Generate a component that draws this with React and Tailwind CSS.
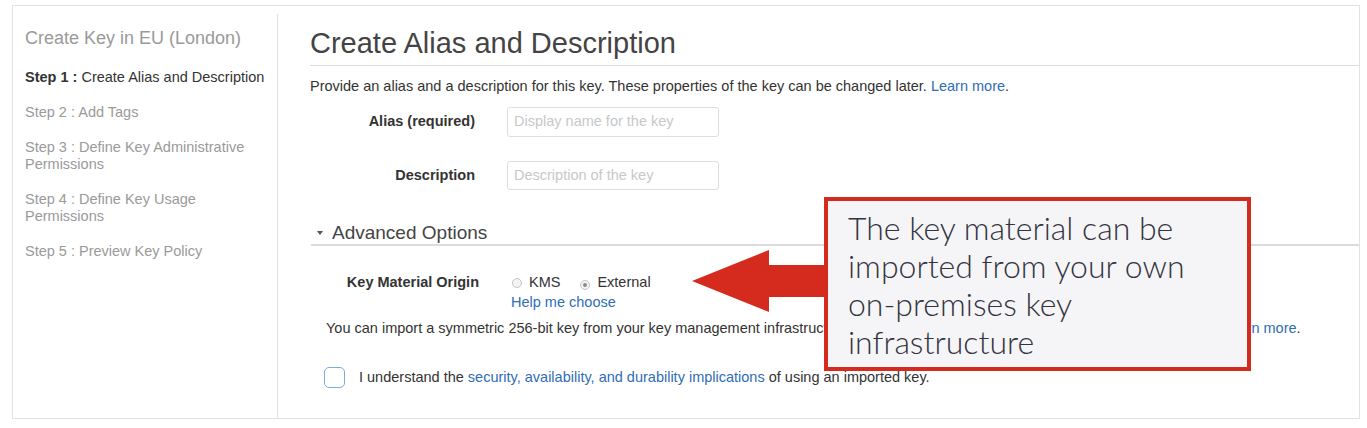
import React from 'react';

const steps = [
  { label: 'Step 2 : Add Tags' },
  { label: 'Step 3 : Define Key Administrative Permissions' },
  { label: 'Step 4 : Define Key Usage Permissions' },
  { label: 'Step 5 : Preview Key Policy' }
];

function Radio({ checked }) {
  return (
    <span className="inline-flex items-center justify-center w-[10px] h-[10px] rounded-full border border-[#c4c4c4] bg-[#f4f4f4]">
      {checked && <span className="w-[4px] h-[4px] rounded-full bg-[#8a8a8a]" />}
    </span>
  );
}

export default function App() {
  return (
    <div className="relative w-[1367px] h-[428px] bg-white font-['Liberation_Sans',Arial,sans-serif] text-[#333]">
      <div className="absolute left-[12px] top-[5px] w-[1348px] h-[414px] border border-[#e2e2e2] flex">
        {/* sidebar */}
        <div className="w-[265px] mt-[8px] border-r border-[#e2e2e2] pl-[12px] pt-[13px]">
          <div className="text-[18px] text-[#9a9a9a] leading-[22px]">Create Key in EU (London)</div>
          <div className="mt-[20px] text-[14.5px] leading-[17px] text-[#333] whitespace-nowrap">
            <span className="font-bold">Step 1 :</span> Create Alias and Description
          </div>
          {steps.map((s) => (
            <div key={s.label} className="mt-[18px] text-[14.5px] leading-[17px] text-[#9a9a9a] pr-[14px]">
              {s.label}
            </div>
          ))}
        </div>

        {/* main */}
        <div className="flex-1 pt-[21px]">
          <div className="ml-[32px] border-b border-[#dcdcdc] pb-[6px]">
            <h1 className="text-[29px] leading-[32px] text-[#444]">Create Alias and Description</h1>
          </div>
          <p className="ml-[32px] mt-[12px] text-[14.5px] leading-[17px] text-[#333]">
            Provide an alias and a description for this key. These properties of the key can be changed later.{' '}
            <span className="text-[#2f6db5]">Learn more</span>.
          </p>

          <div className="ml-[32px] mt-[12px] flex items-center">
            <label className="w-[165px] text-right text-[14.5px] font-bold text-[#333]">Alias (required)</label>
            <div className="ml-[32px] w-[212px] h-[30px] border border-[#dedede] rounded-[3px] px-[6px] flex items-center text-[14.5px] text-[#c8c8c8]">
              Display name for the key
            </div>
          </div>
          <div className="ml-[32px] mt-[24px] flex items-center">
            <label className="w-[165px] text-right text-[14.5px] font-bold text-[#333]">Description</label>
            <div className="ml-[32px] w-[212px] h-[29px] border border-[#dedede] rounded-[3px] px-[6px] flex items-center text-[14.5px] text-[#c8c8c8]">
              Description of the key
            </div>
          </div>

          <div className="ml-[33px] mt-[32px] border-b-2 border-[#dcdcdc] flex items-center">
            <span className="ml-[6px] w-0 h-0 border-l-[3px] border-r-[3px] border-t-[4px] border-l-transparent border-r-transparent border-t-[#555]" />
            <span className="ml-[9px] text-[19px] leading-[22px] text-[#444]">Advanced Options</span>
          </div>

          <div className="ml-[32px] mt-[28px] flex items-start">
            <label className="w-[169px] text-right text-[14.5px] leading-[17px] font-bold text-[#333]">Key Material Origin</label>
            <div className="ml-[32px]">
              <div className="flex items-center text-[14.5px] leading-[17px] text-[#333] pl-[1px]">
                <Radio />
                <span className="ml-[7px]">KMS</span>
                <span className="ml-[20px]"><Radio checked /></span>
                <span className="ml-[7px]">External</span>
              </div>
              <div className="mt-[3px] text-[14.5px] leading-[17px] text-[#2f6db5]">Help me choose</div>
            </div>
          </div>

          <p className="ml-[48px] mt-[9px] text-[14.5px] leading-[17px] text-[#333] whitespace-nowrap">
            You can import a symmetric 256-bit key from your key management infrastructure into KMS and use it like any other customer master keys.{' '}
            <span className="text-[#2f6db5]">Learn more</span>.
          </p>

          <div className="ml-[46px] mt-[30px] flex items-center">
            <span className="w-[21px] h-[21px] rounded-[5px] border-[1.5px] border-[#7aaee0] bg-white" />
            <span className="ml-[14px] text-[14.5px] leading-[17px] text-[#333]">
              I understand the <span className="text-[#2f6db5]">security, availability, and durability implications</span> of using an imported key.
            </span>
          </div>
        </div>
      </div>

      {/* red arrow */}
      <svg className="absolute left-[690px] top-[248px]" width="140" height="66" viewBox="0 0 140 66">
        <polygon points="2,33 79,2 79,17 140,17 140,49 79,49 79,64" fill="#d52b1e" />
      </svg>

      {/* callout */}
      <div className="absolute left-[824px] top-[197px] w-[427px] h-[174px] border-[4px] border-[#d52b1e] bg-[#f5f5f7] pl-[20px] pt-[8px] font-['Lato',sans-serif] font-light text-[32px] leading-[38px] text-[#33333f]">
        The key material can be<br />
        imported from your own<br />
        on-premises key<br />
        infrastructure
      </div>
    </div>
  );
}
